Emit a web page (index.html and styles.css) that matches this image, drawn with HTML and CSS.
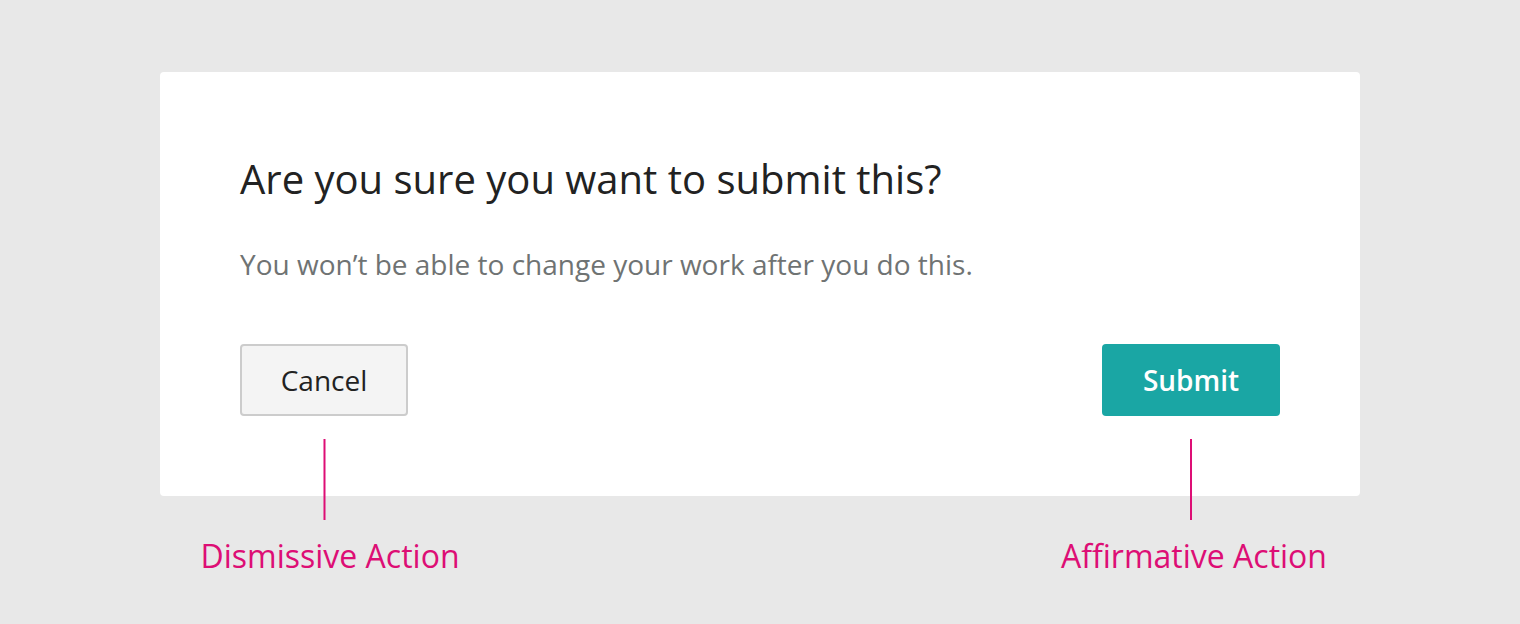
FILE: index.html
```html
<!DOCTYPE html>
<html>
<head>
<meta charset="utf-8">
<link rel="stylesheet" href="styles.css">
</head>
<body>
<div class="page">
  <div class="card">
    <h1 class="title">Are you sure you want to submit this?</h1>
    <p class="text">You won’t be able to change your work after you do this.</p>
    <div class="actions">
      <div class="action">
        <button class="btn btn-cancel">Cancel</button>
        <div class="note">
          <span class="note-line"></span>
          <span class="note-label note-label-left">Dismissive Action</span>
        </div>
      </div>
      <div class="action">
        <button class="btn btn-submit">Submit</button>
        <div class="note">
          <span class="note-line"></span>
          <span class="note-label note-label-right">Affirmative Action</span>
        </div>
      </div>
    </div>
  </div>
</div>
</body>
</html>
```
FILE: styles.css
```css
html, body {
  margin: 0;
  padding: 0;
  background: #e8e8e8;
  font-family: "Open Sans", "Noto Sans", sans-serif;
}
.page {
  padding: 72px 160px 0;
  height: 624px;
  box-sizing: border-box;
}
.card {
  background: #fff;
  border-radius: 4px;
  height: 424px;
  box-sizing: border-box;
  padding: 79px 80px 0;
  display: flex;
  flex-direction: column;
}
.title {
  margin: 0;
  font-size: 40px;
  line-height: 56px;
  font-weight: 400;
  color: #222;
}
.text {
  margin: 37px 0 0;
  font-size: 28px;
  line-height: 40px;
  color: #6f7373;
}
.actions {
  margin-top: 60px;
  display: flex;
  justify-content: space-between;
}
.action {
  position: relative;
}
.btn {
  display: block;
  height: 72px;
  border-radius: 4px;
  font-family: "Open Sans", "Noto Sans", sans-serif;
  font-size: 28px;
  padding: 0;
  box-sizing: border-box;
}
.btn-cancel {
  width: 168px;
  background: #f4f4f4;
  border: 2px solid #cccccc;
  color: #222;
}
.btn-submit {
  width: 178px;
  background: #1aa6a4;
  border: none;
  color: #fff;
  font-weight: 600;
}
.note {
  position: absolute;
  top: calc(100% + 23px);
  left: 50%;
  transform: translateX(-50%);
  display: flex;
  flex-direction: column;
  align-items: center;
}
.note-line {
  width: 2px;
  height: 81px;
  background: #dd0e75;
}
.note-label {
  margin-top: 14px;
  font-size: 32px;
  line-height: 44px;
  color: #dd0e75;
  white-space: nowrap;
}
.note-label-left {
  margin-left: 12px;
}
.note-label-right {
  margin-left: 6px;
}
```
